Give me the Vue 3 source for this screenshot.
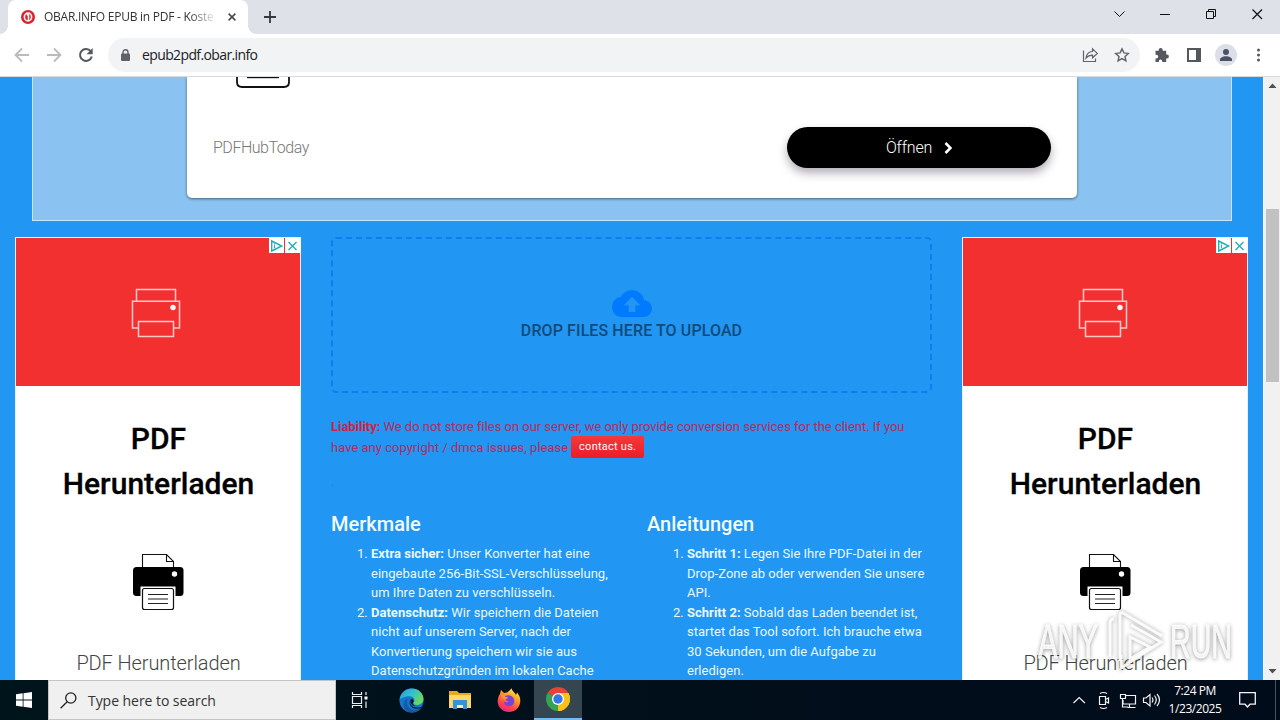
<script setup>
const sides = ['left', 'right']
const features = [
  { title: 'Extra sicher:', lines: ['Unser Konverter hat eine', 'eingebaute 256-Bit-SSL-Verschlüsselung,', 'um Ihre Daten zu verschlüsseln.'] },
  { title: 'Datenschutz:', lines: ['Wir speichern die Dateien', 'nicht auf unserem Server, nach der', 'Konvertierung speichern wir sie aus', 'Datenschutzgründen im lokalen Cache'] }
]
const steps = [
  { title: 'Schritt 1:', lines: ['Legen Sie Ihre PDF-Datei in der', 'Drop-Zone ab oder verwenden Sie unsere', 'API.'] },
  { title: 'Schritt 2:', lines: ['Sobald das Laden beendet ist,', 'startet das Tool sofort. Ich brauche etwa', '30 Sekunden, um die Aufgabe zu', 'erledigen.'] }
]
const columns = [
  { heading: 'Merkmale', items: features },
  { heading: 'Anleitungen', items: steps }
]
</script>

<template>
  <div class="screen">
    <header class="tabs">
      <div class="tab">
        <svg class="favicon" width="14" height="14" viewBox="0 0 14 14"><circle cx="7" cy="7" r="7" fill="#d8232f" /><ellipse cx="7" cy="7" rx="3.600" ry="4" fill="none" stroke="#fff" stroke-width="1.600" /><path d="M5.600 4.800h1.900v5.400" fill="none" stroke="#fff" stroke-width="1.500" /></svg>
        <span class="tab-title">OBAR.INFO EPUB in PDF - Koste</span>
        <svg class="tab-close" width="8" height="8" viewBox="0 0 8 8"><path d="M.6.6l6.800 6.800M7.400.6L.6 7.400" stroke="#45484c" stroke-width="1.500" /></svg>
      </div>
      <svg class="plus" width="12" height="12" viewBox="0 0 12 12"><path d="M6 0v12M0 6h12" stroke="#36393e" stroke-width="1.800" /></svg>
      <svg class="window-controls" width="156" height="34" viewBox="0 0 156 34" fill="none" stroke="#111" stroke-width="1">
        <path d="M4.500 11.500l5 5 5-5" />
        <path d="M50 14.500h10" />
        <path d="M96.500 11.500h7v7h-7zM98.500 11V9.500h7v7H104" />
        <path d="M142.500 9.500l9.500 9.500M152 9.500L142.500 19" stroke-width="1.200" />
      </svg>
    </header>

    <div class="toolbar">
      <svg class="nav" width="100" height="42" viewBox="0 0 100 42" fill="none">
        <path d="M29 21H16M22 14.500L15.500 21l6.500 6.500M47 21h13M54 14.500l6.500 6.500-6.500 6.500" stroke="#b9bbbf" stroke-width="1.800" />
        <path d="M90.800 17.300a6 6 0 1 0 1 5.200" stroke="#54585d" stroke-width="2" /><path d="M92.700 14v6.200h-6.200z" fill="#54585d" />
      </svg>
      <div class="omnibox">
        <svg class="lock" width="9" height="12" viewBox="0 0 9 12"><rect y="4.500" width="9" height="7.500" rx="1" fill="#5f6368" /><path d="M2 5V3.200a2.500 2.500 0 0 1 5 0V5" fill="none" stroke="#5f6368" stroke-width="1.400" /></svg>
        <span class="url">epub2pdf.obar.info</span>
        <svg class="omni-icons" width="50" height="32" viewBox="0 0 50 32" fill="none" stroke="#5f6368">
          <path d="M3.500 11.500v11h12v-3" stroke-width="1.200" />
          <path d="M6 19c.5-4 3-6.300 6.500-6.500V9.800l4.800 4.600-4.800 4.400v-2.600C9.600 16.200 7.700 17 6 19z" stroke-width="1.200" />
          <path d="M42 10.300l1.900 4 4.400.5-3.300 3 .9 4.400-3.900-2.200-3.900 2.200.9-4.400-3.300-3 4.400-.5z" transform="translate(0 -.4)" stroke-width="1.400" />
        </svg>
      </div>
      <svg class="tools" width="140" height="42" viewBox="0 0 140 42">
        <path d="M15.500 16.700h3.200v-.8a2 2 0 0 1 4 0v.8h3.500v3.700h.7a2 2 0 0 1 0 4h-.7V28h-4v-.8a1.700 1.700 0 0 0-3.400 0v.8h-3.300v-3.500h.8a1.900 1.900 0 0 0 0-3.800h-.8z" fill="#54585d" />
        <path d="M47 14h14v14H47zM49 16v10h7V16z" fill="#54585d" fill-rule="evenodd" />
        <circle cx="86" cy="21" r="11" fill="#dcdfe8" /><circle cx="86" cy="18" r="3" fill="#4b5166" /><path d="M80 27v-1.500c0-2 3-3.300 6-3.300s6 1.300 6 3.300V27z" fill="#4b5166" />
        <g fill="#54585d"><circle cx="118.500" cy="16" r="1.500" /><circle cx="118.500" cy="21" r="1.500" /><circle cx="118.500" cy="26" r="1.500" /></g>
      </svg>
    </div>

    <div class="viewport">
      <main class="page">
        <section class="banner">
          <div class="banner-card">
            <svg class="cut-printer" width="54" height="12" viewBox="0 0 54 12" fill="none" stroke="#111"><path d="M1 0v5q0 5 5 5h42q5 0 5-5V0" stroke-width="1.800" /><path d="M11 .5h32" stroke-width="1.400" /></svg>
            <div class="banner-row">
              <span class="brand">PDFHubToday</span>
              <div class="open"><span>Öffnen</span><svg width="8" height="12" viewBox="0 0 8 12"><path d="M1.500 1l5 5-5 5" fill="none" stroke="#fff" stroke-width="2.600" /></svg></div>
            </div>
          </div>
        </section>

        <section class="columns">
          <aside v-for="side in sides" :key="side" class="ad" :class="side">
            <div class="ad-hero">
              <svg width="50" height="50" viewBox="0 0 50 50" fill="none" stroke="#ffc9c6" stroke-width="1.500"><path d="M5.500 13V1.500h39V13M7.500 40H1.500V13.300h47V40h-6M7.500 33.500h35v15h-35z" /><circle cx="42" cy="19.500" r="2.700" fill="#fff" stroke="none" /></svg>
              <svg class="choices" width="32" height="16" viewBox="0 0 32 16"><path d="M0 0h15v15H0zM16 0h16v15H16z" fill="#fff" /><path d="M2.700 3v10l10-5z" fill="none" stroke="#20aeb8" stroke-width="1.400" /><path d="M5.500 6.500v3.800M5.500 4.700v1" stroke="#20aeb8" /><path d="M19.500 4l8 8M27.500 4l-8 8" stroke="#20aeb8" stroke-width="1.400" /></svg>
            </div>
            <h2>PDF<br>Herunterladen</h2>
            <svg class="printer" width="52" height="58" viewBox="0 0 52 58">
              <path d="M10.500 15V1.500h24l7 7V15M34.500 1.500v7h7" fill="#fff" stroke="#111" stroke-width="1.100" />
              <rect x="1" y="14" width="50.500" height="29" rx="3.500" /><circle cx="42.500" cy="21" r="2.700" fill="#fff" />
              <path d="M8.500 33.500h35V44h-35z" fill="#fff" /><rect x="10.500" y="35.500" width="31" height="21" rx="2" fill="#fff" stroke="#111" stroke-width="1.200" />
              <path d="M16 41.500h20M16 46h20M16 50.500h20" stroke="#222" stroke-width="1.100" />
            </svg>
            <p>PDF Herunterladen</p>
          </aside>

          <div class="center">
            <div class="drop">
              <svg width="40" height="27" viewBox="0 4 24 16" preserveAspectRatio="none"><path d="M19.350 10.040A7.490 7.490 0 0 0 12 4C9.110 4 6.600 5.640 5.350 8.040A5.994 5.994 0 0 0 0 14c0 3.310 2.690 6 6 6h13c2.760 0 5-2.240 5-5 0-2.640-2.050-4.780-4.650-4.960zM14 13v4h-4v-4H7l5-5 5 5z" fill="#007bff" /></svg>
              <span>DROP FILES HERE TO UPLOAD</span>
            </div>
            <div class="liability">
              <div class="l1"><b>Liability:</b> We do not store files on our server, we only provide conversion services for the client. If you</div>
              <div class="l2"><span>have any copyright / dmca issues, please</span><span class="contact">contact us.</span></div>
            </div>
            <div class="dot">.</div>
            <div class="lists">
              <section v-for="c in columns" :key="c.heading">
                <h3>{{ c.heading }}</h3>
                <ol>
                  <li v-for="item in c.items" :key="item.title">
                    <b>{{ item.title }}</b>{{ ' ' }}<template v-for="(line, i) in item.lines" :key="line"><br v-if="i">{{ line }}</template>
                  </li>
                </ol>
              </section>
            </div>
          </div>
        </section>

        <svg class="watermark" width="204" height="72" viewBox="0 0 204 72">
          <g class="wm-text"><text x="2" y="49" textLength="60" lengthAdjust="spacingAndGlyphs">ANY</text><text x="134" y="49" textLength="62" lengthAdjust="spacingAndGlyphs">RUN</text></g>
          <g class="wm-mark"><path d="M74 48V14q0-4 4-4" /><path d="M84 52V6q0-3 3-2l39 23" /><path d="M95 16l30 17-40 26V46" /><path d="M94 28v22l20-12z" /></g>
        </svg>
      </main>
      <div class="scrollbar">
        <svg width="9" height="5" viewBox="0 0 9 5"><path d="M.5 5l4-4.500 4 4.500z" fill="#505050" /></svg>
        <div class="thumb"></div>
        <svg class="down" width="9" height="5" viewBox="0 0 9 5"><path d="M.5 0l4 4.500 4-4.500z" fill="#505050" /></svg>
      </div>
    </div>

    <footer class="taskbar">
      <div class="start"><svg width="16" height="16" viewBox="0 0 16 16"><path d="M0 2.200L6.700 1.300V7.600H0zM7.500 1.200L16 0v7.600H7.500zM0 8.400h6.700v6.300L0 13.800zM7.500 8.400H16V16l-8.500-1.200z" fill="#fff" /></svg></div>
      <div class="search"><svg width="17" height="17" viewBox="0 0 17 17" fill="none" stroke="#222" stroke-width="1.300"><circle cx="10.800" cy="6" r="5.100" /><path d="M7.200 9.800L.6 16.300" /></svg><span>Type here to search</span></div>
      <div class="task view"><svg width="18" height="16" viewBox="0 0 18 16" fill="none" stroke="#eee"><path d="M1.500 4.500h9v7h-9zM1.500 0v2.500h9V0M1.500 16v-2.500h9V16M15 0v3M15 9.500V16" stroke-width="1.200" /><path d="M13.500 4.500h3v3h-3z" fill="#fff" stroke="none" /></svg></div>
      <div class="task edge">
        <svg width="25" height="25" viewBox="0 0 25 25">
          <defs><linearGradient id="edgeTop" x1="0" y1="0" x2="1" y2="0.500"><stop offset="0" stop-color="#229ce0" /><stop offset=".55" stop-color="#35c1cb" /><stop offset="1" stop-color="#6ad85f" /></linearGradient></defs>
          <circle cx="12.500" cy="12.500" r="12" fill="#1377ce" />
          <path d="M.5 12C1.500 5 6.500.5 12.700.5c7 0 11.800 5 11.800 10.300 0 4-3 6.200-6.500 6.200-3 0-4-1.300-3.300-2.300 2-3 0-6.500-4.200-6.500C6 8.200 1.500 10 .5 12z" fill="url(#edgeTop)" />
          <path d="M9.200 10.500c-3.200 4.800.3 11.500 6.300 11.500 3 0 5.500-1.200 7.500-3-2.300 4-6 5.500-10 5.500C7 24.500 4 19.500 5 15c.5-2.500 2-4 4.200-4.500z" fill="#155aa1" />
          <path d="M11.500 11.500c-1.500 3.500.5 8 6.500 8 2.500 0 4.300-.5 6-1.600l-.8 1.700c-2 .9-3.500 1.100-5.500 1.100-5.500 0-8.700-4.700-6.200-9.200z" fill="#071b27" /><path d="M11.500 11.500c1-.8 2.500-.5 3 .7.400 1-.2 1.900-.5 2.700-.2 1.300.8 2.400 2.500 3-3.500.2-5.800-2.900-5-6.400z" fill="#071b27" />
        </svg>
      </div>
      <div class="task files"><svg width="22" height="20" viewBox="0 0 22 20"><path d="M0 1h8l2 2h12v15H0z" fill="#e9a91d" /><path d="M0 5h22v13H0z" fill="#ffd968" /><path d="M4 10h14v9h-4v-4H8v4H4z" fill="#3592db" /><path d="M8 15h6v3H8z" fill="#ffeab0" /></svg></div>
      <div class="task firefox">
        <svg width="24" height="24" viewBox="0 0 24 24">
          <defs><linearGradient id="fox" x1=".8" y1="0" x2=".3" y2="1"><stop offset="0" stop-color="#fff24a" /><stop offset=".4" stop-color="#ff9a27" /><stop offset=".75" stop-color="#ff4050" /><stop offset="1" stop-color="#e42783" /></linearGradient></defs>
          <path d="M3 6l1-4 3 3 3-.5C12 3.500 13 2 14.500.2 15 3 18 4.500 19 7l1-2.500c2.500 3 3.700 6 3.200 9.500C22.500 20 18 24 12 24S.7 19.500.7 13.500C.7 10.500 1.500 8 3 6z" fill="url(#fox)" />
          <path d="M8 8.500c2.500-2.500 8-1 9 2.500 1.300 4.500-2 7.500-5.500 7.300-3-.2-4.700-2.500-4.500-4.600 1.500 1 4 .6 4.500-.7-2 0-4-1-3.500-4.500z" fill="#7a43d6" /><path d="M4 6.500l4 2.300 3 .5c-.2 1.800-2.700 1.400-3 3l-2-2z" fill="#ff9230" />
        </svg>
      </div>
      <div class="task active">
        <svg width="24" height="24" viewBox="0 0 24 24"><path d="M12 12L1.610 6A12 12 0 0 1 22.390 6z" fill="#e64235" /><path d="M12 12L22.390 6A12 12 0 0 1 12 24z" fill="#fbc116" /><path d="M12 12V24A12 12 0 0 1 1.610 6z" fill="#34a353" /><path d="M12 6h10.390A12 12 0 0 1 12 24l5.200-9z" fill="#fbc116" /><path d="M1.610 6L6.800 15l5.200 3v-6z" fill="#34a353" /><circle cx="12" cy="12" r="6" fill="#fff" /><circle cx="12" cy="12" r="4.700" fill="#3478e5" /></svg>
      </div>
      <svg class="tray" width="92" height="40" viewBox="0 0 92 40" fill="none" stroke="#f2f2f2" stroke-width="1.200">
        <path d="M3.500 23l5.700-5.500 5.700 5.500" />
        <path d="M29.500 16.500h6v8h-6zM35.500 19.500l3-1.500v5l-3-1.500M30 13.500q3.500-2 7 0M30 27.500q3.500 2 7 0" />
        <path d="M55.500 15.500H65.500v8.500H53v-4M57.500 27.500h8M59.500 24v3.500M50.500 14.500h5v4h-5zM52.500 18.500v8.500H58" />
        <path d="M73.500 18v4.500h2.500l4 3.500V14.500L76 18zM82 17.500q2 2.500 0 5M84.500 15.500q3.500 4.500 0 9M87 14q5 6 0 12" />
      </svg>
      <div class="clock"><span>7:24 PM</span><span class="date">1/23/2025</span></div>
      <svg class="action" width="17" height="17" viewBox="0 0 17 17"><path d="M.7.7h15.600v11.500H11L8.500 15 6 12.200H.7z" fill="none" stroke="#f4f4f4" stroke-width="1.300" /></svg>
      <div class="peek"></div>
    </footer>
  </div>
</template>

<style>
html, body { margin: 0; overflow: hidden; }
</style>

<style scoped>
* { box-sizing: border-box; }
svg { display: block; flex: none; }
.screen { width: 1280px; height: 720px; display: flex; flex-direction: column; overflow: hidden; font-family: Roboto, sans-serif; background: #fff; }
.tabs { height: 34px; background: #dee1e8; display: flex; align-items: flex-start; flex: none; }
.tab { position: relative; margin-left: 8px; width: 240px; height: 34px; background: #fff; border-radius: 8px 8px 0 0; display: flex; align-items: center; padding-left: 13px; }
.tab::before, .tab::after { content: ''; position: absolute; bottom: 0; width: 8px; height: 8px; }
.tab::before { left: -8px; background: radial-gradient(circle at 0 0, transparent 7.500px, #fff 8px); }
.tab::after { right: -8px; background: radial-gradient(circle at 100% 0, transparent 7.500px, #fff 8px); }
.tab-title { margin-left: 9px; width: 171px; overflow: hidden; white-space: nowrap; font: 12px/20px "Open Sans", sans-serif; letter-spacing: -.25px; color: #333; mask-image: linear-gradient(to right, #000 145px, transparent 173px); }
.tab-close { margin-left: 13px; }
.plus { margin: 11px 0 0 16px; }
.window-controls { margin-left: auto; margin-right: 14px; }
.toolbar { height: 43px; border-bottom: 1px solid #d7d9dc; display: flex; flex: none; background: #fff; }
.omnibox { margin: 4px 0 0 8px; width: 1032px; height: 34px; border-radius: 17px; background: #f1f3f4; display: flex; align-items: center; }
.lock { margin-left: 13px; }
.url { margin-left: 12px; font: 14px/20px "Open Sans", sans-serif; letter-spacing: -.62px; color: #202124; }
.omni-icons { margin-left: auto; margin-right: 10px; }
.viewport { height: 603px; display: flex; flex: none; overflow: hidden; }
.page { position: relative; width: 1263px; height: 603px; background: #2196f3; overflow: hidden; }
.banner { margin: 0 31px 0 32px; height: 144px; background: #8ac3f1; border: 1px solid #cbe6fb; border-top: 0; padding: 0 154px; }
.banner-card { height: 121px; background: #fff; border-radius: 0 0 5px 5px; box-shadow: 0 1px 3px rgba(0, 0, 0, .5); padding: 0 26px; }
.cut-printer { margin-left: 23px; }
.banner-row { margin-top: 38px; display: flex; justify-content: space-between; align-items: center; }
.brand { font-size: 16px; font-weight: 300; color: #777; letter-spacing: -.48px; }
.open { width: 264px; height: 41px; border-radius: 21px; background: #000; color: #fff; display: flex; align-items: center; justify-content: center; gap: 12px; font-size: 16px; font-weight: 300; letter-spacing: -.2px; box-shadow: 0 5px 10px rgba(30, 20, 50, .35); }
.columns { margin-top: 16px; padding: 0 15px; display: grid; grid-template-columns: 286px 601px 286px; gap: 30px; }
.ad { grid-row: 1; height: 460px; background: #fff; border: 1px solid #e3f1fc; display: flex; flex-direction: column; align-items: center; }
.left { grid-column: 1; }
.right { grid-column: 3; }
.ad-hero { position: relative; width: 284px; height: 148px; background: #f33030; display: flex; align-items: center; justify-content: center; padding: 2px 5px 0 0; }
.choices { position: absolute; right: -1px; top: 0; }
.ad h2 { margin: 30px 0 0; padding-left: 1px; font-size: 30px; font-weight: 500; line-height: 45px; text-align: center; color: #000; -webkit-text-stroke: .3px #000; }
.printer { margin-top: 47px; }
.ad p { margin: 39px 0 0; padding-left: 1px; font-size: 20px; line-height: 26px; font-weight: 300; letter-spacing: -.1px; color: #444; }
.center { grid-column: 2; grid-row: 1; }
.drop { height: 156px; border: 2px dashed #0b7ff0; border-radius: 5px; display: flex; flex-direction: column; align-items: center; padding-top: 51px; }
.drop span { margin-top: 3px; font-size: 16px; line-height: 22px; font-weight: 500; letter-spacing: .1px; color: #124a7a; white-space: nowrap; }
.liability { margin-top: 24px; color: #b82c5c; font-size: 13px; white-space: nowrap; }
.liability b { color: #d32342; }
.l1 { line-height: 19px; letter-spacing: -.035px; }
.l2 { height: 22px; display: flex; align-items: center; letter-spacing: .01px; }
.contact { margin-left: 3px; width: 73px; height: 22px; border-radius: 2px; background: linear-gradient(#f43a3a, #ec1c28); color: #fff; font-size: 11px; line-height: 22px; text-align: center; letter-spacing: .25px; }
.dot { margin-top: 14px; height: 20px; font-size: 13px; line-height: 20px; color: #207fd2; }
.lists { display: grid; grid-template-columns: 301px 285px; column-gap: 15px; margin-top: 20px; }
.lists h3 { margin: 0; font-size: 20px; font-weight: 500; line-height: 24px; color: #f2fbff; }
.lists ol { margin: 8px 0 0; padding-left: 40px; font-size: 13px; line-height: 19.500px; color: #e9f8ff; letter-spacing: .02px; white-space: nowrap; }
.watermark { position: absolute; left: 1036px; top: 532px; overflow: visible; }
.wm-text { font: 49px "Liberation Sans", sans-serif; fill: rgba(255, 255, 255, .85); stroke: rgba(255, 255, 255, .8); stroke-width: 1; filter: drop-shadow(0 1px 2px rgba(0, 0, 0, .45)); }
.wm-mark { fill: none; stroke: rgba(255, 255, 255, .9); stroke-width: 3; filter: drop-shadow(0 0 2px rgba(0, 0, 0, .4)); }
.scrollbar { width: 17px; height: 603px; background: #f1f1f1; border-left: 1px solid #fff; display: flex; flex-direction: column; align-items: center; padding-top: 6px; }
.thumb { margin-top: 121px; width: 13px; height: 173px; background: #c1c1c1; }
.down { margin-top: auto; margin-bottom: 6px; }
.taskbar { height: 40px; flex: none; display: flex; align-items: center; background: linear-gradient(to right, #00141c, #010d1a 75%, #010c1b); color: #fff; }
.start { width: 48px; height: 40px; display: flex; align-items: center; justify-content: center; }
.search { width: 288px; height: 40px; background: #f0f0f0; border: 1px solid #c5c5c5; display: flex; align-items: center; padding-left: 11px; font: 14px/20px "Open Sans", sans-serif; color: #333; }
.search span { margin: 2px 0 0 11px; letter-spacing: -.05px; }
.task { width: 49px; height: 40px; display: flex; align-items: center; justify-content: center; }
.view { padding-right: 1px; }
.edge { padding-left: 3px; }
.files { padding-left: 2px; }
.firefox { padding-left: 2px; }
.active { width: 48px; margin-left: 2px; background: #354650; border-bottom: 2px solid #76b9ed; }
.tray { margin-left: 488px; }
.clock { margin-left: 4px; width: 58px; display: flex; flex-direction: column; align-items: center; font: 12px/18px "Open Sans", sans-serif; letter-spacing: -.45px; white-space: nowrap; }
.action { margin-left: 15px; }
.peek { margin-left: auto; margin-right: 4px; width: 1px; height: 40px; background: #47515d; }
</style>
